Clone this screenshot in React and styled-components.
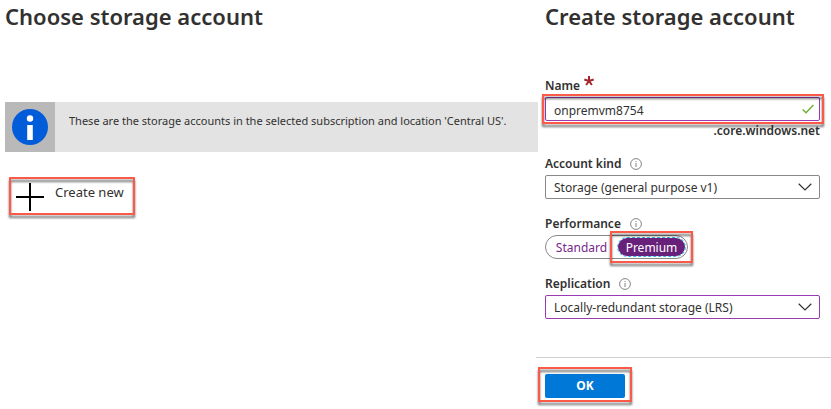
import React, { useState } from "react";
import styled, { createGlobalStyle, css } from "styled-components";

const GlobalStyle = createGlobalStyle`
  *, *::before, *::after { box-sizing: border-box; }
  body {
    margin: 0;
    background: #fff;
    color: #323130;
    font-family: "Noto Sans", "Open Sans", sans-serif;
    font-size: 12px;
    line-height: 20px;
  }
  button, input, select { font: inherit; color: inherit; }
`;

const Page = styled.div`
  display: grid;
  grid-template-columns: minmax(0, 1fr) 295px;
`;

const ListPane = styled.main`
  padding-left: 5px;
`;

const FormPane = styled.form`
  display: flex;
  flex-direction: column;
`;

const Title = styled.h1`
  margin: 0;
  font-size: 22px;
  line-height: 32px;
  font-weight: 600;
  white-space: nowrap;
`;

const Highlight = styled.div`
  position: relative;
  width: ${(p) => (p.$fill ? "auto" : "fit-content")};
  &::after {
    content: "";
    position: absolute;
    inset: ${(p) => p.$inset || "0"};
    border: 2px solid #fb5a48;
    filter: drop-shadow(0 3px 1px rgba(0, 0, 0, 0.55));
    pointer-events: none;
  }
`;

const Notice = styled.section`
  display: flex;
  min-height: 50px;
  margin: 70px -2px 25px 0;
  background: #e3e3e3;
`;

const NoticeIcon = styled.div`
  display: grid;
  place-items: center;
  flex: 0 0 50px;
  background: #b9b9b9;
`;

const NoticeText = styled.p`
  margin: 0;
  padding: 9px 0 0 14px;
  font-size: 11px;
`;

const CreateButton = styled.button`
  display: flex;
  align-items: flex-start;
  gap: 11px;
  height: 38px;
  margin-left: 4px;
  padding: 5px 11px 0 7px;
  border: 0;
  background: none;
  font-size: 13px;
  svg { margin-top: 1px; }
`;

const CreateHighlight = styled(Highlight)`
  &::after { left: 4px; }
`;

const Fields = styled.div`
  padding: 0 11px 0 9px;
`;

const Field = styled.div`
  margin-top: ${(p) => p.$gap}px;
`;

const LabelRow = styled.div`
  display: flex;
  align-items: center;
  gap: ${(p) => p.$gap || 9}px;
  height: 22px;
  label, span { font-weight: 600; }
`;

const Required = styled.svg`
  align-self: flex-start;
`;

const box = css`
  display: block;
  width: 100%;
  height: 24px;
  padding: 2px 32px 0 8px;
  border: 1px solid ${(p) => (p.$active ? "#9a3ab0" : "#8a8886")};
  border-radius: 2px;
  background: #fff;
  outline: 0;
`;

const TextBox = styled.input`${box}`;

const SelectBox = styled.select`
  ${box}
  appearance: none;
`;

const Control = styled.div`
  position: relative;
  > svg {
    position: absolute;
    right: ${(p) => p.$right}px;
    top: 0;
    bottom: 0;
    margin: auto 0;
    pointer-events: none;
  }
`;

const Suffix = styled.div`
  text-align: right;
  font-weight: 600;
`;

const Pill = styled.div`
  display: flex;
  justify-content: space-between;
  width: 143px;
  height: 24px;
  padding: 1px;
  border: 1px solid #8a8886;
  border-radius: 12px;
`;

const PillOption = styled.button`
  display: grid;
  place-items: center;
  width: 69px;
  height: 20px;
  padding: 0;
  border: 1px ${(p) => (p.$on ? "dashed #35b6ec" : "solid transparent")};
  border-radius: 10px;
  background: ${(p) => (p.$on ? "#68217a" : "transparent")};
  background-clip: padding-box;
  color: ${(p) => (p.$on ? "#fff" : "#77278b")};
`;

const Footer = styled.footer`
  margin-top: 38px;
  padding: 16px 9px 10px;
  border-top: 1px solid #d2d0ce;
`;

const OkButton = styled.button`
  display: block;
  width: 80px;
  height: 24px;
  padding: 0;
  border: 0;
  border-radius: 2px;
  background: #0078d7;
  color: #fff;
  font-weight: 700;
  line-height: 24px;
`;

const Info = () => (
  <svg width="12" height="12" viewBox="0 0 12 12" fill="none" stroke="#777" aria-hidden="true">
    <circle cx="6" cy="6" r="5.4" strokeWidth="0.9" />
    <path d="M6 5v4M6 3v1" strokeWidth="0.9" />
  </svg>
);

const Chevron = () => (
  <svg width="14" height="8" viewBox="0 0 14 8" fill="none" stroke="#323130" strokeWidth="1.2" aria-hidden="true">
    <path d="M.7 .8L7 7L13.3 .8" />
  </svg>
);

function Choice({ id, label, gap, value, active }) {
  return (
    <Field $gap={gap}>
      <LabelRow>
        <label htmlFor={id}>{label}</label>
        <Info />
      </LabelRow>
      <Control $right={8}>
        <SelectBox id={id} $active={active}>
          <option>{value}</option>
        </SelectBox>
        <Chevron />
      </Control>
    </Field>
  );
}

export default function App() {
  const [name, setName] = useState("onpremvm8754");
  const [tier, setTier] = useState("Premium");
  return (
    <>
      <GlobalStyle />
      <Page>
        <ListPane>
          <Title>Choose storage account</Title>
          <Notice>
            <NoticeIcon>
              <svg width="36" height="36" viewBox="0 0 36 36" aria-hidden="true">
                <circle cx="18" cy="18" r="18" fill="#015cda" />
                <circle cx="18" cy="9.5" r="3.2" fill="#fff" />
                <path d="M15.2 16h5.6v15h-5.6z" fill="#fff" />
              </svg>
            </NoticeIcon>
            <NoticeText>
              These are the storage accounts in the selected subscription and location 'Central US'.
            </NoticeText>
          </Notice>
          <CreateHighlight>
            <CreateButton type="button">
              <svg width="28" height="28" viewBox="0 0 28 28" stroke="#000" strokeWidth="2" aria-hidden="true">
                <path d="M14 0v28M0 14h28" />
              </svg>
              Create new
            </CreateButton>
          </CreateHighlight>
        </ListPane>

        <FormPane onSubmit={(e) => e.preventDefault()}>
          <Fields>
            <Title>Create storage account</Title>
            <Field $gap={43}>
              <LabelRow $gap={4}>
                <label htmlFor="name">Name</label>
                <Required width="10" height="11" viewBox="0 0 10 11" stroke="#a4262c" strokeWidth="2" aria-hidden="true">
                  <path d="M5 6V1M5 6L.3 4.5M5 6L9.7 4.5M5 6L2.1 10M5 6L7.9 10" />
                </Required>
              </LabelRow>
              <Highlight $fill $inset="-3px -4px -3px -3px">
                <Control $right={6}>
                  <TextBox id="name" $active required value={name} onChange={(e) => setName(e.target.value)} />
                  <svg width="12" height="10" viewBox="0 0 12 10" fill="none" stroke="#6bb02e" strokeWidth="1.4" aria-hidden="true">
                    <path d="M.6 5.4L4 8.8L11.4 1" />
                  </svg>
                </Control>
              </Highlight>
              <Suffix>.core.windows.net</Suffix>
            </Field>
            <Choice id="kind" label="Account kind" gap={12} value="Storage (general purpose v1)" />
            <Field $gap={14}>
              <LabelRow>
                <span id="perf">Performance</span>
                <Info />
              </LabelRow>
              <Pill role="group" aria-labelledby="perf">
                {["Standard", "Premium"].map((t) => {
                  const option = (
                    <PillOption key={t} type="button" $on={t === tier} aria-pressed={t === tier} onClick={() => setTier(t)}>
                      {t}
                    </PillOption>
                  );
                  return t === "Premium" ? (
                    <Highlight key={t} $inset="-6px -7px -6px -7px">{option}</Highlight>
                  ) : (
                    option
                  );
                })}
              </Pill>
            </Field>
            <Choice id="replication" label="Replication" gap={14} value="Locally-redundant storage (LRS)" active />
          </Fields>
          <Footer>
            <Highlight $inset="-7px -7px -4px -7px">
              <OkButton type="submit">OK</OkButton>
            </Highlight>
          </Footer>
        </FormPane>
      </Page>
    </>
  );
}
